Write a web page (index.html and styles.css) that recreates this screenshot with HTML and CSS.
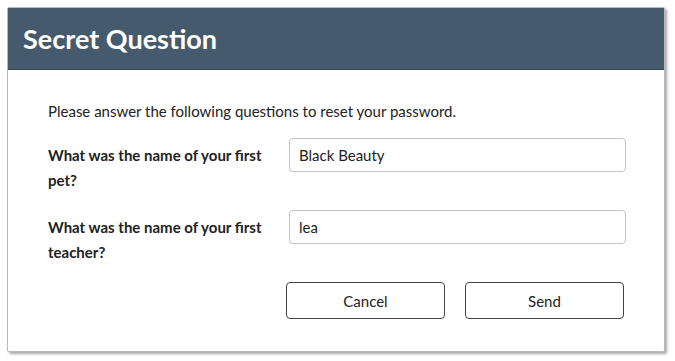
FILE: index.html
```html
<!doctype html>
<html lang="en">
<head>
    <meta charset="utf-8">
    <title>Secret Question</title>
    <link rel="stylesheet" href="styles.css">
</head>
<body>
<div class="dialog">
    <div class="dialog-header">
        <h1 class="dialog-title">Secret Question</h1>
    </div>
    <div class="dialog-body">
        <p class="intro">Please answer the following questions to reset your password.</p>
        <div class="question-row">
            <label class="question-label" for="q1">What was the name of your first pet?</label>
            <input class="question-input" id="q1" type="text" value="Black Beauty">
        </div>
        <div class="question-row">
            <label class="question-label" for="q2">What was the name of your first teacher?</label>
            <input class="question-input" id="q2" type="text" value="lea">
        </div>
        <div class="actions">
            <button class="btn" type="button">Cancel</button>
            <button class="btn" type="button">Send</button>
        </div>
    </div>
</div>
</body>
</html>
```
FILE: styles.css
```css
/* Secret question dialog */
body {
    margin: 0;
    padding: 7px;
    background: #fff;
    font-family: Lato, "Open Sans", sans-serif;
    color: #222;
}

.dialog {
    width: 656px;
    height: 343px;
    border: 1px solid #b8b8b8;
    border-radius: 2px;
    background: #fff;
    box-shadow: 2px 2px 3px rgba(0, 0, 0, 0.35);
    box-sizing: content-box;
}

.dialog-header {
    height: 61px;
    background: #465a6e;
    border-bottom: 1px solid #34495c;
    display: flex;
    align-items: center;
    padding: 0 15px;
}

.dialog-title {
    margin: 0;
    color: #fff;
    font-size: 27px;
    font-weight: 700;
}

.dialog-body {
    padding: 30px 40px 0 40px;
}

.intro {
    margin: 0 0 16px 0;
    font-size: 15px;
    line-height: 22px;
}

.question-row {
    display: grid;
    grid-template-columns: 241px 337px;
    align-items: start;
    margin-bottom: 17px;
}

.question-label {
    font-size: 15px;
    font-weight: 700;
    line-height: 25px;
    padding-top: 5px;
    padding-right: 20px;
}

.question-input {
    height: 34px;
    box-sizing: border-box;
    border: 1px solid #c4c4c4;
    border-radius: 4px;
    padding: 0 9px;
    font-family: inherit;
    font-size: 15px;
    color: #222;
}

.actions {
    display: flex;
    justify-content: flex-end;
    gap: 20px;
}

.btn {
    width: 159px;
    height: 37px;
    border: 1px solid #444;
    border-radius: 4px;
    background: #fff;
    font-family: inherit;
    font-size: 15px;
    color: #222;
}
```
